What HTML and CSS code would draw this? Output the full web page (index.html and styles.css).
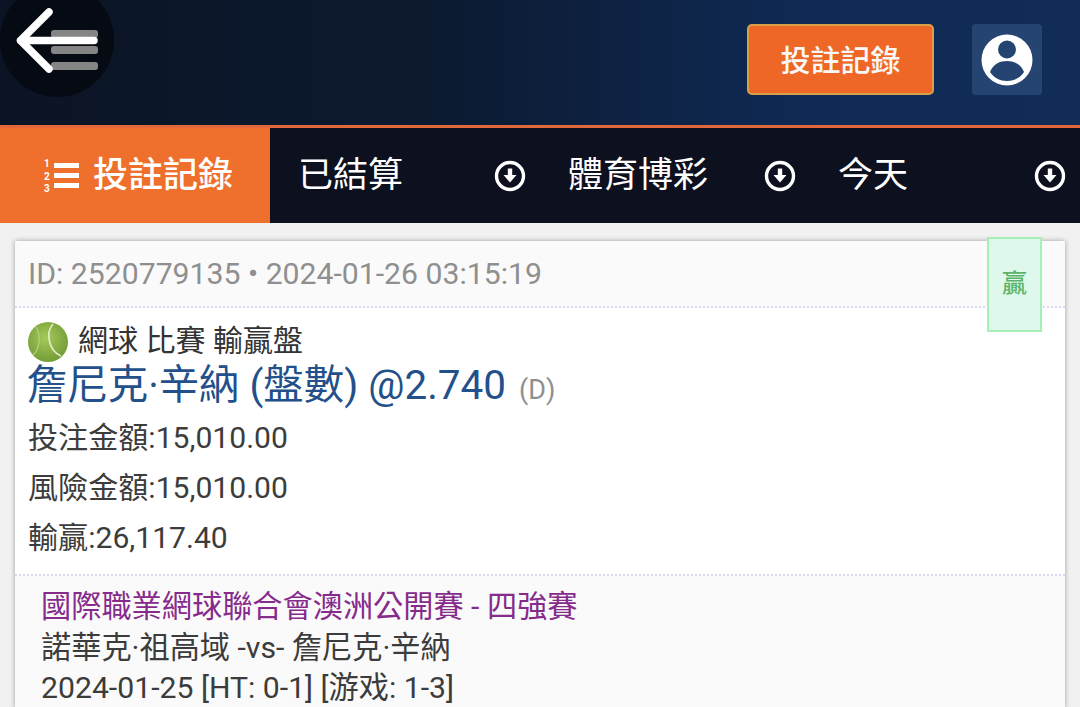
FILE: index.html
```html
<!DOCTYPE html>
<html lang="zh-Hant">

<head>
    <meta charset="UTF-8">
    <meta name="viewport" content="width=device-width, initial-scale=1.0">
    <title>投註記錄</title>
    <link rel="stylesheet" href="styles.css">
</head>

<body>
    <header class="topbar">
        <div class="menu-wrap">
            <div class="menu-circle">
                <span class="menu-line"></span>
                <span class="menu-line"></span>
                <span class="menu-line"></span>
            </div>
            <svg class="back-arrow" width="110" height="90" viewBox="0 0 110 90">
                <path d="M49 12 L20.500 40.500 L49 69 M20.500 40.500 H94" fill="none" stroke="#fff" stroke-width="7.500" stroke-linecap="round" stroke-linejoin="round"/>
            </svg>
        </div>
        <div class="top-actions">
            <button class="history-btn">投註記錄</button>
            <div class="user-btn">
                <svg width="52" height="52" viewBox="0 0 52 52">
                    <circle cx="26" cy="26" r="25.500" fill="#fff"/>
                    <circle cx="26" cy="15.500" r="9" fill="#264472"/>
                    <path d="M9 38 C12 30 19 27 26 27 C33 27 40 30 43 38 C39 44 33 47 26 47 C19 47 13 44 9 38 Z" fill="#264472"/>
                </svg>
            </div>
        </div>
    </header>

    <nav class="tabs">
        <div class="tab-active">
            <svg class="list-icon" width="36" height="38" viewBox="0 0 36 38">
                <path d="M10 8.500 H35 M10 18.500 H35 M10 28.500 H35" stroke="#fff" stroke-width="5"/>
                <text x="0" y="10" class="list-num">1</text>
                <text x="0" y="22.500" class="list-num">2</text>
                <text x="0" y="35" class="list-num">3</text>
            </svg>
            <span class="tab-label">投註記錄</span>
        </div>
        <div class="tab">
            <span class="tab-label">已結算</span>
            <svg class="down-icon" width="32" height="32" viewBox="0 0 32 32"><use href="#down"/></svg>
        </div>
        <div class="tab">
            <span class="tab-label">體育博彩</span>
            <svg class="down-icon" width="32" height="32" viewBox="0 0 32 32"><use href="#down"/></svg>
        </div>
        <div class="tab">
            <span class="tab-label">今天</span>
            <svg class="down-icon" width="32" height="32" viewBox="0 0 32 32"><use href="#down"/></svg>
        </div>
    </nav>

    <svg class="defs" width="0" height="0">
        <symbol id="down" viewBox="0 0 32 32">
            <circle cx="16" cy="16" r="13.500" fill="none" stroke="#fff" stroke-width="3.400"/>
            <path d="M16 8.500 V16" stroke="#fff" stroke-width="4.400"/>
            <path d="M9.500 15 H22.500 L16 22.500 Z" fill="#fff"/>
        </symbol>
    </svg>

    <main class="content">
        <article class="card">
            <div class="status">贏</div>
            <div class="card-head">ID: 2520779135 • 2024-01-26 03:15:19</div>
            <div class="bet">
                <div class="sport">
                    <svg class="ball" width="42" height="42" viewBox="0 0 42 42">
                        <defs>
                            <radialGradient id="ballFill" cx="45%" cy="40%" r="65%">
                                <stop offset="0" stop-color="#a6c85a"/>
                                <stop offset="1" stop-color="#6f9a35"/>
                            </radialGradient>
                        </defs>
                        <circle cx="21" cy="21" r="20" fill="url(#ballFill)"/>
                        <path d="M26 3 C18 12 22 30 34 35" fill="none" stroke="#e3edc6" stroke-width="1.600"/>
                        <path d="M9 6 C14 14 13 28 6 34" fill="none" stroke="#b4cf78" stroke-width="1.400"/>
                    </svg>
                    <span>網球 比賽 輸贏盤</span>
                </div>
                <div class="pick">詹尼克·辛納 (盤數) @2.740 <small>(D)</small></div>
                <p class="amount">投注金額:15,010.00</p>
                <p class="amount">風險金額:15,010.00</p>
                <p class="amount">輸贏:26,117.40</p>
            </div>
            <div class="match">
                <div class="league">國際職業網球聯合會澳洲公開賽 - 四強賽</div>
                <div class="match-line">諾華克·祖高域 -vs- 詹尼克·辛納</div>
                <div class="match-line">2024-01-25 [HT: 0-1] [游戏: 1-3]</div>
            </div>
        </article>
    </main>
</body>

</html>
```
FILE: styles.css
```css
html,
body {
    margin: 0;
    height: 707px;
    overflow: hidden;
}

body {
    font-family: Roboto, "Noto Sans CJK TC", sans-serif;
    background-color: #f1f1f1;
    color: #333;
}

.topbar {
    height: 125px;
    display: flex;
    justify-content: space-between;
    background: linear-gradient(90deg, #0b1424 0%, #0c1a30 40%, #0f2a55 75%, #122c58 100%);
    border-bottom: 3px solid #e0683a;
}

.menu-wrap {
    position: relative;
    width: 120px;
}

.menu-circle {
    width: 114px;
    height: 114px;
    margin-top: -17px;
    border-radius: 50%;
    background-color: #060a12;
    display: flex;
    flex-direction: column;
    align-items: flex-end;
    padding-top: 47px;
    box-sizing: border-box;
    padding-right: 16px;
    gap: 8.500px;
}

.menu-line {
    width: 47px;
    height: 7.500px;
    border-radius: 3px;
    background-color: #858585;
}

.back-arrow {
    position: absolute;
    left: 0;
    top: 0;
}

.top-actions {
    display: flex;
    align-items: flex-start;
    padding-top: 24px;
    padding-right: 38px;
    gap: 38px;
}

.history-btn {
    width: 187px;
    height: 71px;
    padding: 0 0 4px;
    background-color: #ef6726;
    color: #f8f8f8;
    font-family: inherit;
    font-size: 30px;
    font-weight: 500;
    border: 2px solid #d9a04a;
    border-radius: 5px;
}

.user-btn {
    width: 70px;
    height: 71px;
    border-radius: 4px;
    background-color: #264472;
    display: flex;
    align-items: center;
    justify-content: center;
}

.tabs {
    height: 95px;
    display: flex;
    background-color: #0c101f;
    color: #fff;
    font-size: 35px;
}

.tab-label {
    padding-bottom: 8px;
}

.tab-active {
    width: 270px;
    display: flex;
    align-items: center;
    justify-content: center;
    gap: 13px;
    background-color: #ee702c;
    font-weight: 500;
    padding-left: 7px;
    box-sizing: border-box;
}

.list-num {
    font-size: 10px;
    font-weight: 700;
    fill: #fff;
}

.tab {
    width: 270px;
    display: flex;
    align-items: center;
    justify-content: space-between;
    box-sizing: border-box;
    padding-left: 28px;
    padding-right: 14px;
}

.defs {
    position: absolute;
}

.content {
    padding: 18px 15px 0;
}

.card {
    position: relative;
    background-color: #fff;
    box-shadow: 0 0 5px rgba(0, 0, 0, 0.35);
}

.status {
    position: absolute;
    top: -4px;
    right: 23px;
    width: 55px;
    height: 95px;
    box-sizing: border-box;
    display: flex;
    align-items: center;
    justify-content: center;
    padding-bottom: 8px;
    background-color: #def9ec;
    border: 2px solid #a4f0b8;
    color: #5cb46a;
    font-size: 25px;
    font-weight: 500;
}

.card-head {
    height: 67px;
    box-sizing: border-box;
    padding: 15px 13px 0;
    font-size: 30.200px;
    color: #8f8f8f;
    background-color: #fafafa;
    border-bottom: 2px dotted #d5d9f2;
}

.bet {
    padding: 13px 13px 0;
    height: 268px;
    box-sizing: border-box;
    border-bottom: 2px dotted #d5d9f2;
}

.sport {
    display: flex;
    align-items: center;
    gap: 9px;
    height: 42px;
    margin-left: -1px;
    font-size: 30px;
}

.sport span {
    margin-top: -9px;
}

.pick {
    font-size: 40.400px;
    line-height: 46px;
    margin-left: -1px;
    color: #23508a;
}

.pick small {
    margin-left: 3px;
    font-size: 27px;
    color: #8f8f8f;
}

.amount {
    margin: 0;
    font-size: 30.100px;
    line-height: 50px;
    color: #3c3c3c;
}

.match {
    padding: 11px 26px 0;
    background-color: #fafafa;
    font-size: 30.200px;
    line-height: 40.500px;
}

.league {
    color: #862b8c;
}

.match-line {
    color: #3c3c3c;
}
```
